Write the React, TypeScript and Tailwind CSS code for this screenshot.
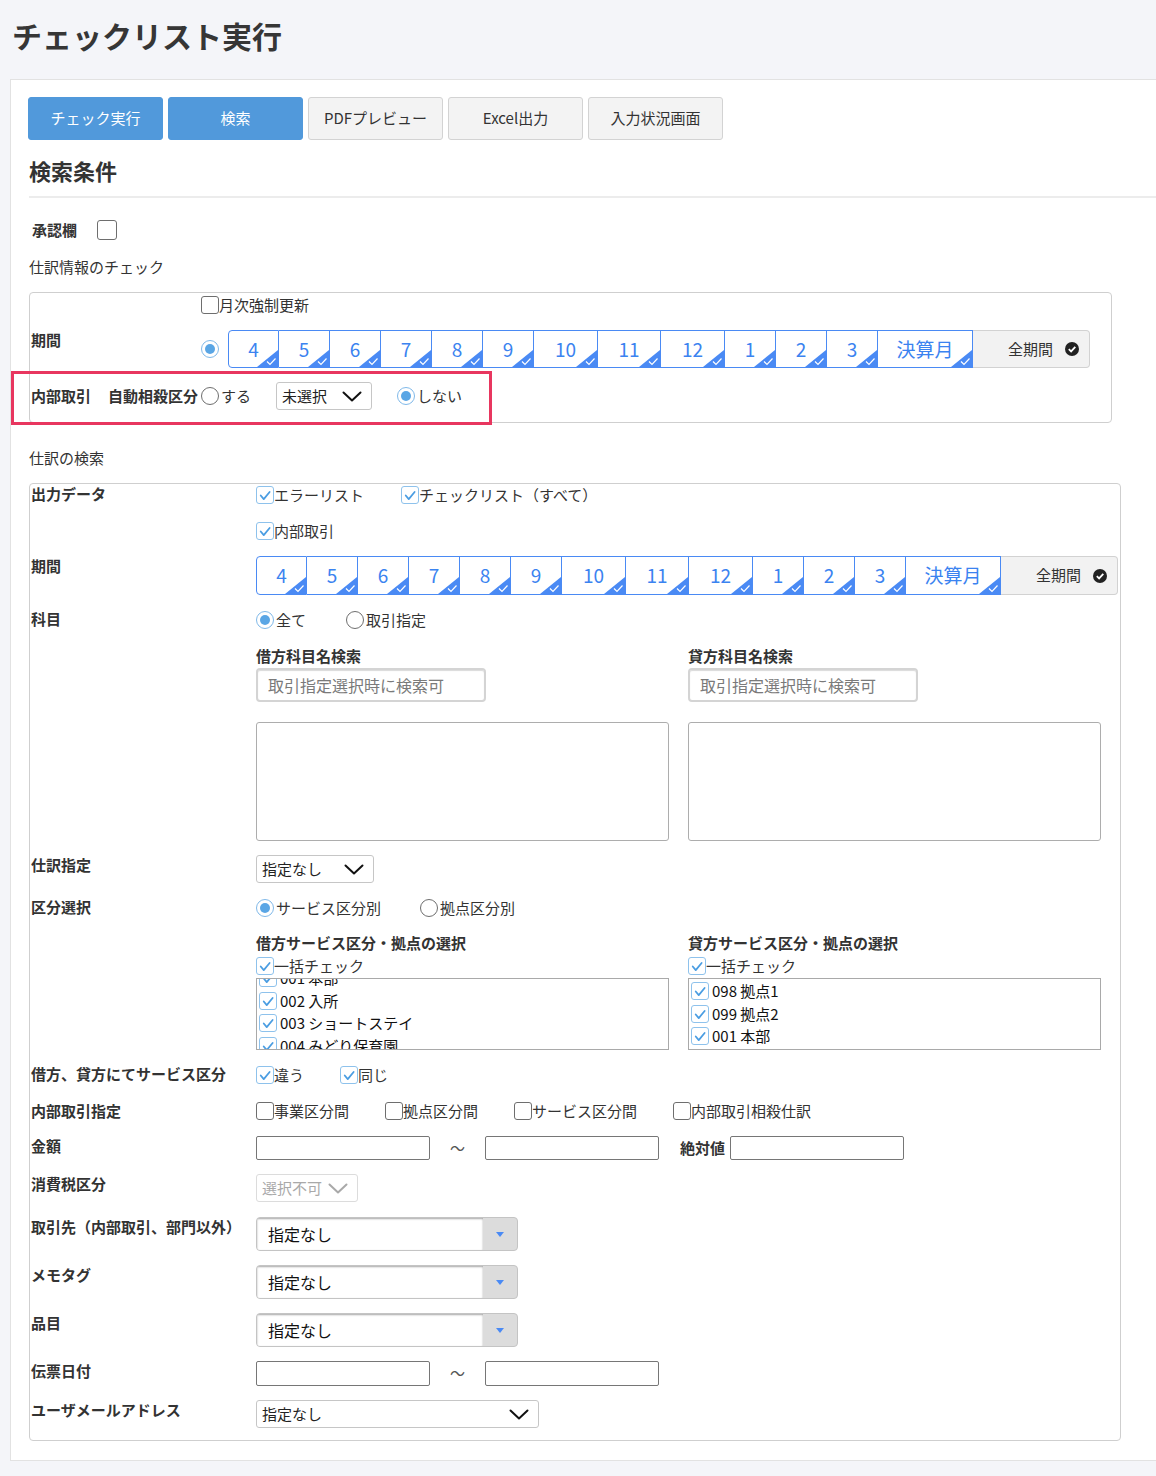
import { useEffect, useRef } from "react"

const MONTHS = ["4", "5", "6", "7", "8", "9", "10", "11", "12", "1", "2", "3"]

const debitUnits = ["001 本部", "002 入所", "003 ショートステイ", "004 みどり保育園"]
const creditUnits = ["098 拠点1", "099 拠点2", "001 本部"]

function Tick() {
  return (
    <svg viewBox="0 0 18 18" className="h-full w-full" fill="none">
      <path d="M4.2 9.6 L7.6 13.6 L14.2 5.6" stroke="#4a9de2" strokeWidth="2" strokeLinecap="round" strokeLinejoin="round" />
    </svg>
  )
}

function CheckBox({ checked = false, label, big = false }: { checked?: boolean; label?: string; big?: boolean }) {
  const box = big ? "h-[20px] w-[20px]" : "h-[18px] w-[18px]"
  return (
    <label className="flex items-center whitespace-nowrap">
      <span
        className={`${box} shrink-0 rounded-[3px] bg-white ${
          checked ? "border-[1.5px] border-[#8ec2ec]" : "border border-[#6e6e6e]"
        }`}
      >
        {checked && <Tick />}
      </span>
      {label && <span>{label}</span>}
    </label>
  )
}

function Radio({ checked = false, label }: { checked?: boolean; label?: string }) {
  return (
    <label className="flex items-center whitespace-nowrap">
      <span
        className={`flex h-[18px] w-[18px] shrink-0 items-center justify-center rounded-full bg-white ${
          checked ? "border-[1.5px] border-[#80b9e9]" : "border border-[#6e6e6e]"
        }`}
      >
        {checked && <span className="h-[10px] w-[10px] rounded-full bg-[#5aa6e5]" />}
      </span>
      {label && <span className="ml-[2px]">{label}</span>}
    </label>
  )
}

function Chevron({ color = "#111" }: { color?: string }) {
  return (
    <svg viewBox="0 0 20 11" className="h-[11px] w-[20px]" fill="none">
      <path d="M1.5 1.5 L10 9.5 L18.5 1.5" stroke={color} strokeWidth="2" strokeLinecap="round" strokeLinejoin="round" />
    </svg>
  )
}

function SelectBox({ value, className = "", disabled = false }: { value: string; className?: string; disabled?: boolean }) {
  return (
    <div
      className={`flex h-[28px] items-center justify-between rounded-[3px] border bg-white pl-[5px] pr-[9px] text-[15px] ${
        disabled ? "border-[#dcdcdc] text-[#a9a9a9]" : "border-[#c6c6c6] text-[#222]"
      } ${className}`}
    >
      <span>{value}</span>
      <Chevron color={disabled ? "#a9a9a9" : "#111"} />
    </div>
  )
}

function ComboBox({ value }: { value: string }) {
  return (
    <div className="flex h-[34px] w-[262px] overflow-hidden rounded-[4px] border border-[#c4c4c4] bg-[#dcdcdc]">
      <div className="flex flex-1 items-center bg-white pl-[11px] text-[16px] text-[#111] shadow-[inset_0_1px_2px_rgba(0,0,0,0.35)]">
        {value}
      </div>
      <div className="flex w-[34px] items-center justify-center">
        <svg viewBox="0 0 8 5" className="h-[5px] w-[8px]">
          <polygon points="0,0 8,0 4,5" fill="#4a8af4" />
        </svg>
      </div>
    </div>
  )
}

function PeriodPicker({ className }: { className: string }) {
  return (
    <div className={`flex ${className}`}>
      {[...MONTHS, "決算月"].map((m, i) => {
        const w = m === "決算月" ? "w-[95px]" : m === "11" ? "w-[63px]" : m.length === 2 ? "w-[64px]" : "w-[51px]"
        return (
          <div
            key={m + i}
            className={`relative flex ${w} items-center justify-center border-y border-r border-[#4a8af4] bg-white text-[19px] text-[#3b83f0] ${
              i === 0 ? "rounded-l-[4px] border-l" : ""
            }`}
          >
            {m}
            <svg viewBox="0 0 21 17" className="absolute bottom-0 right-0 h-[17px] w-[21px]" fill="none">
              <polygon points="21,0 21,17 0,17" fill="#4a8af4" />
              <path d="M10 11.5 L13 14.5 L18.5 8.5" stroke="#fff" strokeWidth="1.2" />
            </svg>
          </div>
        )
      })}
      <div className="flex w-[117px] items-center justify-end gap-[12px] rounded-r-[4px] border-y border-r border-[#d2d2d2] bg-[#f2f2f2] pr-[10px] text-[15px] text-[#333]">
        全期間
        <svg viewBox="0 0 14 14" className="h-[14px] w-[14px]">
          <circle cx="7" cy="7" r="7" fill="#222" />
          <path d="M3.8 7.2 L6.1 9.4 L10.3 4.9" stroke="#fff" strokeWidth="1.8" fill="none" />
        </svg>
      </div>
    </div>
  )
}

function Row({ label, className = "", children }: { label: string; className?: string; children: React.ReactNode }) {
  return (
    <div className={`flex ${className}`}>
      <div className="w-[226px] shrink-0 whitespace-nowrap pl-[1px] text-[15px] font-bold leading-[20px]">{label}</div>
      <div className="flex-1">{children}</div>
    </div>
  )
}

function UnitList({ items, scroll = 0 }: { items: string[]; scroll?: number }) {
  const ref = useRef<HTMLDivElement>(null)
  useEffect(() => {
    if (ref.current) ref.current.scrollTop = scroll
  }, [scroll])
  return (
    <div ref={ref} className="h-[72px] w-[413px] overflow-hidden border border-[#a9a9a9] pt-[1px]">
      {items.map((it) => (
        <div key={it} className="flex h-[22.5px] items-center gap-[3px] pl-[2px] text-[15px] text-[#111]">
          <CheckBox checked />
          <span>{it}</span>
        </div>
      ))}
    </div>
  )
}

function Buttons() {
  const blue = "bg-[#5199db] border-[#5199db] text-white"
  const gray = "bg-[#f3f3f3] border-[#d3d3d3] text-[#333]"
  const items: [string, string][] = [
    ["チェック実行", blue],
    ["検索", blue],
    ["PDFプレビュー", gray],
    ["Excel出力", gray],
    ["入力状況画面", gray],
  ]
  return (
    <div className="-ml-px flex gap-[5px]">
      {items.map(([t, c]) => (
        <button key={t} className={`h-[43px] w-[135px] rounded-[3px] border text-[15px] ${c}`}>
          {t}
        </button>
      ))}
    </div>
  )
}

export default function App() {
  return (
    <div className="min-h-[1476px] overflow-hidden bg-[#f4f5f9] font-['Noto_Sans_CJK_JP','Noto_Sans',sans-serif] text-[#333]">
      <h1 className="h-[79px] pl-[12px] pt-[14px] text-[30px] font-bold leading-[42px] text-[#363636]">チェックリスト実行</h1>

      <div className="ml-[10px] w-[1170px] border border-[#e2e2e2] bg-white pb-[19px] pl-[18px] pt-[17px]">
        <Buttons />

        <h2 className="mt-[14px] text-[22px] font-bold leading-[32px]">検索条件</h2>
        <div className="mt-[10px] h-[2px] bg-[#ececec]" />

        <div className="mt-[20px] flex h-[24px] items-center gap-[20px] pl-[3px]">
          <span className="text-[15px] font-bold">承認欄</span>
          <CheckBox big />
        </div>

        <div className="mt-[13px] flex h-[24px] items-center text-[15px]">仕訳情報のチェック</div>

        {/* 仕訳情報のチェック */}
        <div className="relative mt-[13px] w-[1083px] rounded-[4px] border border-[#cfcfcf] text-[15px]">
          <div className="mt-[2px] flex h-[20px] items-center pl-[171px]">
            <CheckBox label="月次強制更新" />
          </div>
          <div className="mt-[15px] flex h-[38px]">
            <div className="w-[171px] pl-[1px] font-bold leading-[20px]">期間</div>
            <div className="mr-[9px] flex items-center">
              <Radio checked />
            </div>
            <PeriodPicker className="h-[38px]" />
          </div>
          <div className="mb-[12px] mt-[14px] flex h-[28px] items-center pl-[1px]">
            <span className="w-[77px] font-bold">内部取引</span>
            <span className="w-[93px] font-bold">自動相殺区分</span>
            <Radio label="する" />
            <SelectBox value="未選択" className="ml-[25px] w-[96px]" />
            <div className="ml-[25px]">
              <Radio checked label="しない" />
            </div>
          </div>
          <div className="absolute left-[-19px] top-[78px] h-[54px] w-[481px] border-[3px] border-[#e8365f]" />
        </div>

        <div className="mt-[23px] flex h-[24px] items-center text-[15px]">仕訳の検索</div>

        {/* 仕訳の検索 */}
        <div className="mt-[13px] w-[1092px] rounded-[4px] border border-[#cfcfcf] pb-[12px] text-[15px]">
          <Row label="出力データ">
            <div className="flex h-[22px] items-center gap-[37px]">
              <CheckBox checked label="エラーリスト" />
              <CheckBox checked label="チェックリスト（すべて）" />
            </div>
            <div className="mt-[14px] flex h-[22px] items-center">
              <CheckBox checked label="内部取引" />
            </div>
          </Row>

          <Row label="期間" className="mt-[14px]">
            <PeriodPicker className="h-[39px]" />
          </Row>

          <Row label="科目" className="mt-[14px]">
            <div className="flex h-[22px] items-center gap-[40px]">
              <Radio checked label="全て" />
              <Radio label="取引指定" />
            </div>
            <div className="mt-[15px] grid grid-cols-[432px_1fr]">
              {["借方科目名検索", "貸方科目名検索"].map((h) => (
                <div key={h}>
                  <div className="h-[20px] font-bold leading-[20px]">{h}</div>
                  <input
                    readOnly
                    placeholder="取引指定選択時に検索可"
                    className="mt-[2px] h-[34px] w-[230px] rounded-[4px] border-2 border-[#d4d4d4] pl-[10px] text-[16px] shadow-[inset_0_1px_1px_rgba(0,0,0,0.15)] outline-none placeholder:text-[#7a7a7a]"
                  />
                  <div className="mt-[20px] h-[119px] w-[413px] rounded-[3px] border border-[#adadad]" />
                </div>
              ))}
            </div>
          </Row>

          <Row label="仕訳指定" className="mt-[14px]">
            <SelectBox value="指定なし" className="w-[118px]" />
          </Row>

          <Row label="区分選択" className="mt-[14px]">
            <div className="flex h-[22px] items-center gap-[39px]">
              <Radio checked label="サービス区分別" />
              <Radio label="拠点区分別" />
            </div>
            <div className="mt-[14px] grid grid-cols-[432px_1fr]">
              <div>
                <div className="h-[20px] font-bold leading-[20px]">借方サービス区分・拠点の選択</div>
                <div className="mt-[2px] flex h-[22px] items-center">
                  <CheckBox checked label="一括チェック" />
                </div>
                <div className="mt-[1px]">
                  <UnitList items={debitUnits} scroll={13} />
                </div>
              </div>
              <div>
                <div className="h-[20px] font-bold leading-[20px]">貸方サービス区分・拠点の選択</div>
                <div className="mt-[2px] flex h-[22px] items-center">
                  <CheckBox checked label="一括チェック" />
                </div>
                <div className="mt-[1px]">
                  <UnitList items={creditUnits} />
                </div>
              </div>
            </div>
          </Row>

          <Row label="借方、貸方にてサービス区分" className="mt-[14px]">
            <div className="flex h-[22px] items-center gap-[36px]">
              <CheckBox checked label="違う" />
              <CheckBox checked label="同じ" />
            </div>
          </Row>

          <Row label="内部取引指定" className="mt-[15px]">
            <div className="flex h-[20px] items-center gap-[36px]">
              <CheckBox label="事業区分間" />
              <CheckBox label="拠点区分間" />
              <CheckBox label="サービス区分間" />
              <CheckBox label="内部取引相殺仕訳" />
            </div>
          </Row>

          <Row label="金額" className="mt-[15px]">
            <div className="flex h-[24px] items-center">
              <input className="h-[24px] w-[174px] rounded-[2px] border border-[#767676]" />
              <span className="w-[55px] text-center text-[#555]">～</span>
              <input className="h-[24px] w-[174px] rounded-[2px] border border-[#767676]" />
              <span className="ml-[21px] mr-[5px] font-bold">絶対値</span>
              <input className="h-[24px] w-[174px] rounded-[2px] border border-[#767676]" />
            </div>
          </Row>

          <Row label="消費税区分" className="mt-[14px]">
            <SelectBox value="選択不可" disabled className="w-[102px]" />
          </Row>

          <Row label="取引先（内部取引、部門以外）" className="mt-[15px]">
            <ComboBox value="指定なし" />
          </Row>

          <Row label="メモタグ" className="mt-[14px]">
            <ComboBox value="指定なし" />
          </Row>

          <Row label="品目" className="mt-[14px]">
            <ComboBox value="指定なし" />
          </Row>

          <Row label="伝票日付" className="mt-[14px]">
            <div className="flex h-[25px] items-center">
              <input className="h-[25px] w-[174px] rounded-[2px] border border-[#767676]" />
              <span className="w-[55px] text-center text-[#555]">～</span>
              <input className="h-[25px] w-[174px] rounded-[2px] border border-[#767676]" />
            </div>
          </Row>

          <Row label="ユーザメールアドレス" className="mt-[14px]">
            <SelectBox value="指定なし" className="w-[283px]" />
          </Row>
        </div>
      </div>
    </div>
  )
}
